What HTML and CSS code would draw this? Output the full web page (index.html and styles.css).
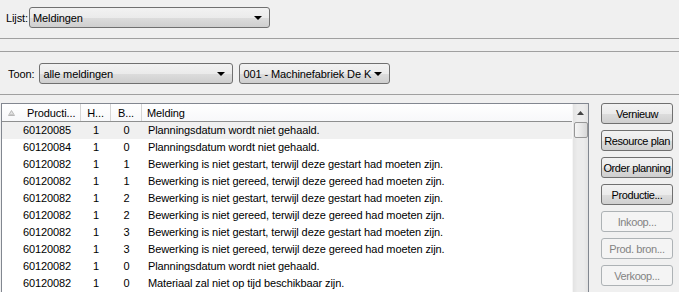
FILE: index.html
```html
<!DOCTYPE html>
<html>
<head>
<meta charset="utf-8">
<link rel="stylesheet" href="styles.css">
</head>
<body>
<div class="row row-lijst">
  <span class="lbl lbl-lijst">Lijst:</span>
  <div class="combo combo-lijst"><span>Meldingen</span><i class="arrow"></i></div>
</div>
<div class="sep sep1"></div>
<div class="sep sep2"></div>
<div class="row row-toon">
  <span class="lbl lbl-toon">Toon:</span>
  <div class="combo combo-toon"><span>alle meldingen</span><i class="arrow"></i></div>
  <div class="combo combo-firm"><span>001 - Machinefabriek De K</span><i class="arrow"></i></div>
</div>
<div class="sep sep3"></div>
<div class="main">
  <div class="list">
    <div class="grid">
      <div class="head">
        <div class="hc c1"><svg class="sorticon" width="7" height="6" viewBox="0 0 7 6"><path d="M0.5 5.5 L3.5 0.5 L6.5 5.5 Z" fill="#e4e4e4" stroke="#b8b8b8" stroke-width="1"/><path d="M2 4.5 L5 4.5" stroke="#c8c8c8"/></svg><span>Producti...</span></div>
        <div class="hc c2">H...</div>
        <div class="hc c3">B...</div>
        <div class="hc c4">Melding</div>
      </div>
      <div class="r sel"><div class="c1">60120085</div><div class="c2">1</div><div class="c3">0</div><div class="c4">Planningsdatum wordt niet gehaald.</div></div>
      <div class="r"><div class="c1">60120084</div><div class="c2">1</div><div class="c3">0</div><div class="c4">Planningsdatum wordt niet gehaald.</div></div>
      <div class="r"><div class="c1">60120082</div><div class="c2">1</div><div class="c3">1</div><div class="c4">Bewerking is niet gestart, terwijl deze gestart had moeten zijn.</div></div>
      <div class="r"><div class="c1">60120082</div><div class="c2">1</div><div class="c3">1</div><div class="c4">Bewerking is niet gereed, terwijl deze gereed had moeten zijn.</div></div>
      <div class="r"><div class="c1">60120082</div><div class="c2">1</div><div class="c3">2</div><div class="c4">Bewerking is niet gestart, terwijl deze gestart had moeten zijn.</div></div>
      <div class="r"><div class="c1">60120082</div><div class="c2">1</div><div class="c3">2</div><div class="c4">Bewerking is niet gereed, terwijl deze gereed had moeten zijn.</div></div>
      <div class="r"><div class="c1">60120082</div><div class="c2">1</div><div class="c3">3</div><div class="c4">Bewerking is niet gestart, terwijl deze gestart had moeten zijn.</div></div>
      <div class="r"><div class="c1">60120082</div><div class="c2">1</div><div class="c3">3</div><div class="c4">Bewerking is niet gereed, terwijl deze gereed had moeten zijn.</div></div>
      <div class="r"><div class="c1">60120082</div><div class="c2">1</div><div class="c3">0</div><div class="c4">Planningsdatum wordt niet gehaald.</div></div>
      <div class="r"><div class="c1">60120082</div><div class="c2">1</div><div class="c3">0</div><div class="c4">Materiaal zal niet op tijd beschikbaar zijn.</div></div>
    </div>
    <div class="vscroll">
      <div class="up"><svg width="7" height="4" viewBox="0 0 7 4"><path d="M0 4 L3.5 0 L7 4 Z" fill="#444"/></svg></div>
      <div class="thumb"></div>
    </div>
  </div>
  <div class="buttons">
    <div class="btn">Vernieuw</div>
    <div class="btn">Resource plan</div>
    <div class="btn">Order planning</div>
    <div class="btn">Productie...</div>
    <div class="btn dis">Inkoop...</div>
    <div class="btn dis">Prod. bron...</div>
    <div class="btn dis">Verkoop...</div>
  </div>
</div>
</body>
</html>
```

FILE: styles.css
```css
html, body {
  margin: 0;
  padding: 0;
  background: #f0f0f0;
  overflow: hidden;
  height: 292px;
}
body {
  font-family: "Liberation Sans", Arial, sans-serif;
  font-size: 11px;
  letter-spacing: -0.1px;
  color: #000;
}
.row {
  display: flex;
  align-items: center;
}
.row-lijst {
  padding: 7px 0 0 6px;
  height: 21px;
}
.row-toon {
  padding: 11px 0 0 8px;
  height: 21px;
}
.lbl-lijst { margin-right: 1px; }
.lbl-toon { margin-right: 5px; }
.combo {
  box-sizing: border-box;
  height: 21px;
  border: 1px solid #707070;
  border-radius: 3px;
  background: linear-gradient(#f2f2f2 0%, #ebebeb 50%, #dddddd 51%, #cfcfcf 100%);
  display: flex;
  align-items: center;
  padding-left: 3px;
  position: relative;
}
.combo span { flex: 1; white-space: nowrap; overflow: hidden; }
.arrow {
  width: 0; height: 0;
  border-left: 4px solid transparent;
  border-right: 4px solid transparent;
  border-top: 4px solid #000;
  margin: 1px 7px 0 2px;
}
.combo-lijst { width: 241px; }
.combo-toon { width: 194px; }
.combo-firm { width: 151px; margin-left: 6px; }
.sep {
  height: 0;
  border-top: 1px solid #a0a0a0;
}
.sep1 { margin-top: 10px; }
.sep2 { margin-top: 12px; }
.sep3 { margin-top: 10px; }
.main {
  display: flex;
  margin-top: 8px;
  padding-left: 1px;
}
.list {
  width: 588px;
  height: 200px;
  box-sizing: border-box;
  border-top: 1px solid #828790;
  border-left: 1px solid #828790;
  border-right: 1px solid #828790;
  background: #fff;
  display: flex;
}
.grid { flex: 1; }
.head, .r {
  display: grid;
  grid-template-columns: 79px 30px 31px 1fr;
}
.head {
  height: 17px;
  border-bottom: 1px solid #8e8f8f;
  background: linear-gradient(#ffffff, #f7f8fa);
}
.hc {
  display: flex;
  align-items: center;
  border-right: 1px solid #d5d5d5;
  white-space: nowrap;
}
.hc.c1 { padding-left: 6px; }
.hc.c1 span { margin-left: 12px; }
.hc.c2, .hc.c3 { justify-content: center; }
.hc.c4 { padding-left: 5px; border-right: none; }
.sorticon { display: block; }
.r { height: 17px; line-height: 17px; white-space: nowrap; }
.r.sel { background: #f0f0f0; }
.r .c1 { padding-left: 21px; }
.r .c2, .r .c3 { text-align: center; }
.r .c4 { padding-left: 6px; overflow: hidden; }
.vscroll {
  width: 16px;
  background: linear-gradient(90deg, #e3e3e3, #ececec 30%, #ececec 70%, #e3e3e3);
  border-left: 1px solid #f6f6f6;
  box-sizing: border-box;
  display: flex;
  flex-direction: column;
  align-items: center;
}
.up {
  height: 17px;
  display: flex;
  align-items: center;
  justify-content: center;
}
.thumb {
  width: 14px;
  height: 16px;
  box-sizing: border-box;
  border: 1px solid #979797;
  border-radius: 2px;
  background: linear-gradient(90deg, #f5f5f5, #e8e8e8 50%, #d8d8d8);
  margin-top: 1px;
}
.buttons {
  margin-left: 12px;
  display: flex;
  flex-direction: column;
  gap: 6px;
}
.btn {
  box-sizing: border-box;
  width: 72px;
  height: 21px;
  border: 1px solid #707070;
  border-radius: 3px;
  background: linear-gradient(#f2f2f2 0%, #ebebeb 50%, #dddddd 51%, #cfcfcf 100%);
  display: flex;
  align-items: center;
  justify-content: center;
  white-space: nowrap;
  letter-spacing: -0.4px;
}
.btn.dis {
  border-color: #adb2b5;
  background: #f4f4f4;
  color: #838383;
}
```
